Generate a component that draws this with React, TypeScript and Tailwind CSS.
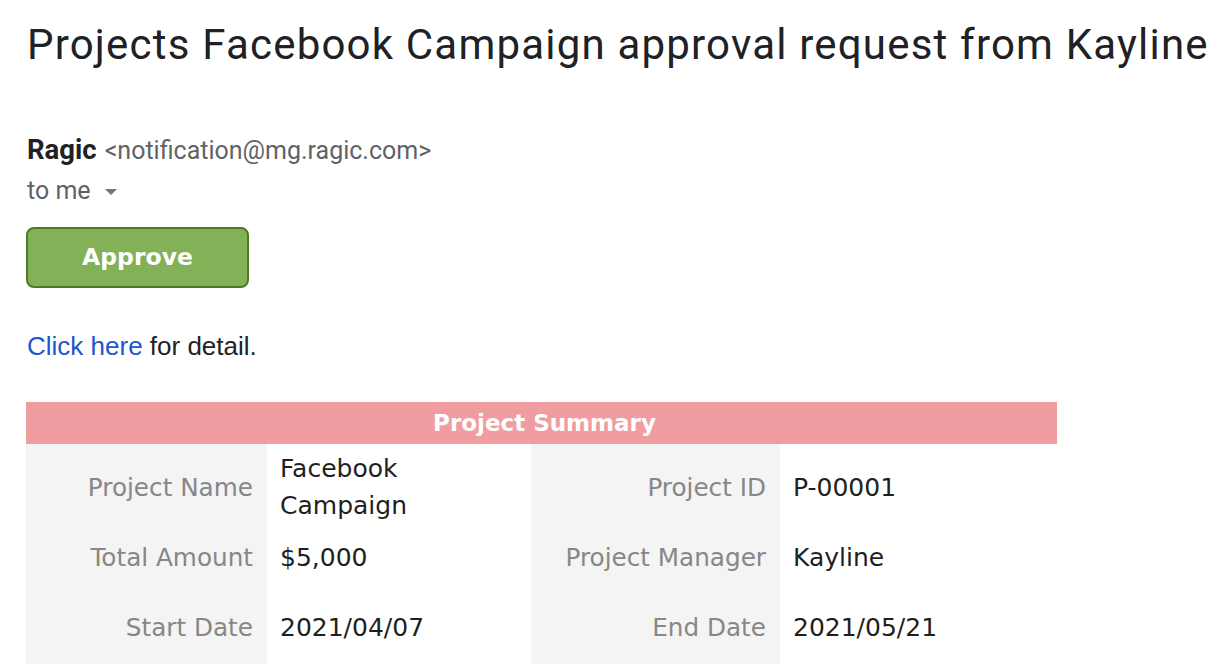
import React from "react";

const tableFont = { fontFamily: '"DejaVu Sans", "Lucida Grande", sans-serif' };

function Label({ children }: { children: React.ReactNode }) {
  return (
    <div className="flex items-center justify-end bg-[#f4f4f4] pr-[14px] text-[24.7px] leading-[37px] text-[#878787]">
      {children}
    </div>
  );
}

function Value({ children }: { children: React.ReactNode }) {
  return (
    <div className="flex items-center bg-white pl-[13px] text-[25px] leading-[37px] text-[#1f1f1f]">
      {children}
    </div>
  );
}

export default function App() {
  return (
    <div className="w-[1220px] h-[664px] overflow-hidden bg-white pl-[26px]">
      <div
        className="ml-[1px] pt-[19px] text-[42px] leading-[52px] tracking-[1.2px] text-[#202124] whitespace-nowrap"
        style={{ fontFamily: 'Roboto, "Noto Sans", sans-serif' }}
      >
        Projects Facebook Campaign approval request from Kayline
      </div>

      <div
        className="ml-[1px] mt-[63px] flex items-baseline whitespace-nowrap leading-[32px]"
        style={{ fontFamily: 'Roboto, "Noto Sans", sans-serif' }}
      >
        <span className="text-[27.5px] font-bold text-[#202124]">Ragic</span>
        <span className="ml-[8px] text-[25px] text-[#5f6368]">&lt;notification@mg.ragic.com&gt;</span>
      </div>

      <div
        className="ml-[1px] mt-[8px] flex items-center leading-[32px] text-[25px] text-[#5f6368]"
        style={{ fontFamily: 'Roboto, "Noto Sans", sans-serif' }}
      >
        <span>to me</span>
        <svg className="ml-[14px] mt-[2px]" width="12" height="6" viewBox="0 0 12 6">
          <path d="M0 0 L12 0 L6 6 Z" fill="#757575" />
        </svg>
      </div>

      <div
        className="mt-[20px] flex h-[61px] w-[223px] items-center justify-center rounded-[8px] border-2 border-[#4d7a27] bg-[#83b157] text-[23.5px] font-bold text-white"
        style={{ fontFamily: '"DejaVu Sans", Verdana, sans-serif' }}
      >
        Approve
      </div>

      <div
        className="ml-[1px] mt-[43px] text-[26px] leading-[30px] text-[#222222]"
        style={{ fontFamily: '"Liberation Sans", Arial, sans-serif' }}
      >
        <span className="text-[#1f56cc]">Click here</span> for detail.
      </div>

      <div className="mt-[41px] w-[1031px]" style={tableFont}>
        <div className="flex h-[42px] items-center justify-center bg-[#f09da1] pl-[6px] text-[23px] font-bold text-white">
          Project Summary
        </div>
        <div className="grid grid-cols-[241px_264px_249px_277px] grid-rows-[86px_54px_86px]">
          <Label>Project Name</Label>
          <Value>
            <span>
              Facebook
              <br />
              Campaign
            </span>
          </Value>
          <Label>Project ID</Label>
          <Value>P-00001</Value>

          <Label>Total Amount</Label>
          <Value>$5,000</Value>
          <Label>Project Manager</Label>
          <Value>Kayline</Value>

          <Label>Start Date</Label>
          <Value>2021/04/07</Value>
          <Label>End Date</Label>
          <Value>2021/05/21</Value>
        </div>
      </div>
    </div>
  );
}
